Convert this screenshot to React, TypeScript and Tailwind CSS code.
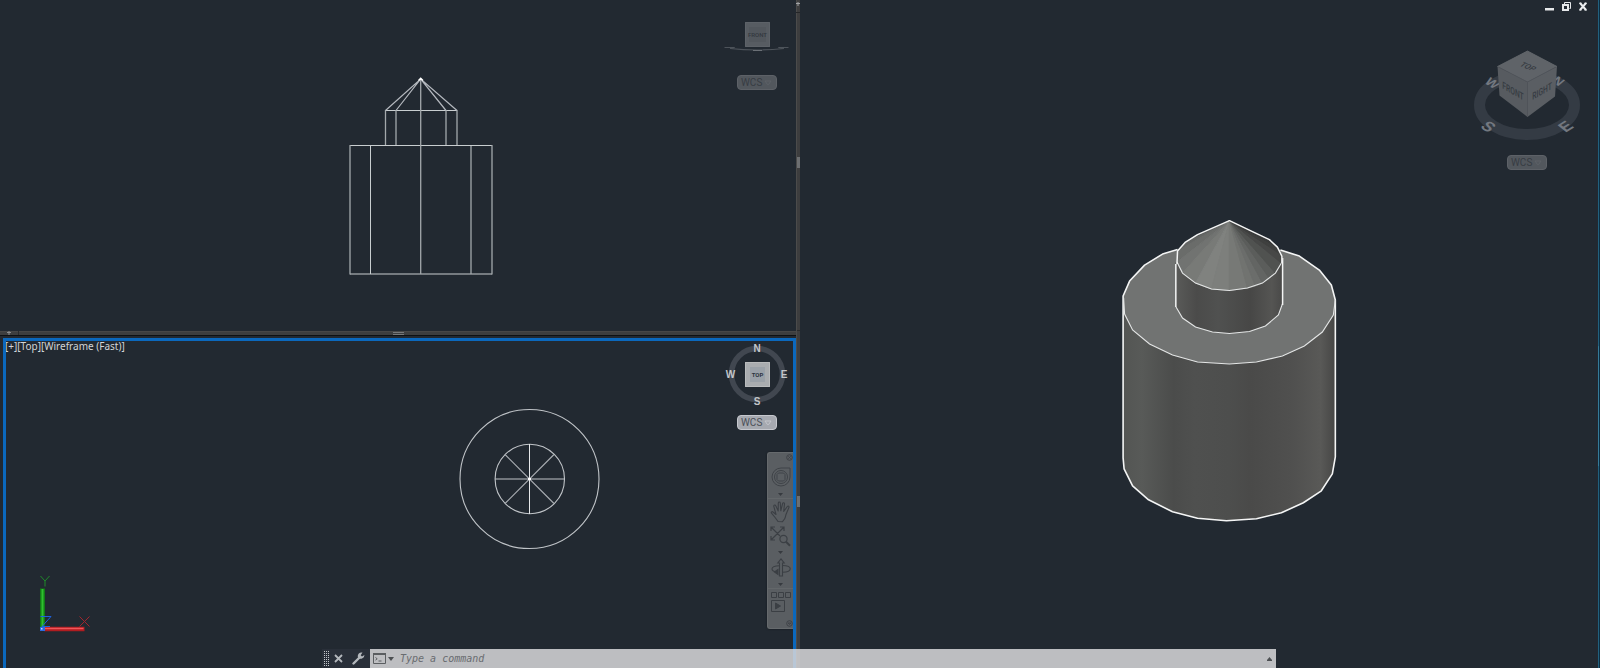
import type { ReactNode } from "react";

const FACE = "Roboto, 'Open Sans', sans-serif";
const ARIAL = "'Liberation Sans', Arial, sans-serif";

function WcsMenu({ active = false, label }: { active?: boolean; label: string }) {
  return (
    <button
      type="button"
      aria-label={label}
      className={
        active
          ? "flex h-[15px] w-10 items-center justify-between rounded border border-[#c6c8ce] bg-[#a6a9b0] pl-[3px] pr-1 font-[Roboto,sans-serif] text-[10px] leading-none text-[#4b4f57]"
          : "flex h-[15px] w-10 items-center justify-between rounded border border-[#5d6167] bg-[#52575d] pl-[3px] pr-1 font-[Roboto,sans-serif] text-[10px] leading-none text-[#373c43]"
      }
    >
      <span>WCS</span>
      <svg width="8" height="6" viewBox="0 0 8 6" fill="none" stroke={active ? "#c4c6cc" : "#5c6167"}>
        <path d="M1 1h6L4.600 4.500h-1.200z" />
      </svg>
    </button>
  );
}

function FrontView() {
  return (
    <svg className="absolute inset-0 h-full w-full" viewBox="0 0 796 331" fill="none" aria-label="Front wireframe">
      <g stroke="#c9ced0" strokeWidth="1">
        <path d="M350 145.500H492M350 274H492M385.500 110.500H457" />
        <path d="M370.500 146V274" />
      </g>
      <g stroke="#a3a8ab" strokeWidth="1.300">
        <path d="M350 145V274.500M492 145V274.500M471 146V274M420.700 79V274" />
        <path d="M385.500 110V145M396 110V145M446 110V145M457 110V145" />
      </g>
      <g stroke="#b4b8be" strokeWidth="1.200">
        <path d="M385.500 110.500L420.700 79L457 110.500M396 110.500L420.700 79L446 110.500" />
      </g>
      <path d="M418.500 80.500l2.200-2.300 2.300 2.300" stroke="#fff" strokeWidth="1.300" />
    </svg>
  );
}

function FrontCube() {
  return (
    <svg width="72" height="32" viewBox="721 20 72 32" fill="none">
      <path d="M724.500 47.500h10l-4 1M788.500 47.500h-10l4 1" stroke="#4d535a" />
      <path d="M730 48.500Q757 51.500 784 48.500" stroke="#4d535a" strokeWidth="1.200" />
      <path d="M753 50.500h9" stroke="#6b7076" strokeWidth="1" />
      <path d="M745 22h25v25h-25z" fill="#575c62" />
      <path d="M745.500 22.500h24v24h-24z" stroke="#5d6268" />
      <path d="M749 27h17v15h-17z" fill="#52575d" />
      <text x="757.500" y="37" textAnchor="middle" fontFamily={FACE} fontSize="6" fontWeight="500" fill="#33383f">
        FRONT
      </text>
    </svg>
  );
}

function TopCube() {
  return (
    <svg width="72" height="66" viewBox="721 341 72 66" fill="none">
      <circle cx="757" cy="374" r="25.500" stroke="#414750" strokeWidth="5.500" />
      <path d="M745 362h25v25h-25z" fill="#a9acaf" />
      <path d="M745.500 362.500h24v24h-24z" stroke="#b9bbbc" />
      <path d="M750 367h15v15h-15z" fill="#9aa1a8" />
      <text x="757.500" y="376.500" textAnchor="middle" fontFamily={FACE} fontSize="6" fontWeight="700" fill="#2b3440">
        TOP
      </text>
      <g fontFamily={ARIAL} fontSize="10" fontWeight="700" fill="#c3c6ca" textAnchor="middle">
        <text x="757" y="351.500">N</text>
        <text x="757" y="405">S</text>
        <text x="730.500" y="378">W</text>
        <text x="784" y="378">E</text>
      </g>
    </svg>
  );
}

function IsoCube() {
  return (
    <svg width="110" height="94" viewBox="1472 48 110 94" fill="none">
      <ellipse cx="1527" cy="105" rx="47.500" ry="29.500" stroke="#343b44" strokeWidth="11" />
      <g fontFamily={ARIAL} fontSize="17" fontWeight="700" fill="#737880" textAnchor="middle">
        <text transform="matrix(.8 .5 -.7 .6 1489 86)" fontSize="14">W</text>
        <text transform="matrix(.8 .5 -.7 .6 1555 84)" fontSize="14">N</text>
        <text transform="matrix(.8 .5 -.75 .6 1484 130)">S</text>
        <text transform="matrix(.8 -.5 .75 .6 1570 130)">E</text>
      </g>
      <path d="M1527.500 51L1557 66.500 1527.500 82 1497.500 66.500z" fill="#5f6368" />
      <path d="M1497.500 66.500L1527.500 82V117L1499.500 95.500z" fill="#575b60" />
      <path d="M1557 66.500L1527.500 82V117L1555 96.500z" fill="#5a5e63" />
      <path d="M1497.500 66.500L1527.500 82 1557 66.500M1527.500 82V117" stroke="#50545a" strokeWidth=".8" />
      <path d="M1497.500 66.500L1527.500 51 1557 66.500" stroke="#666a6f" strokeWidth=".8" />
      <g fontFamily={FACE} fontWeight="500" fill="#363b42" textAnchor="middle">
        <text transform="matrix(.8 .35 -.7 .6 1526 68.500)" fontSize="9">TOP</text>
        <text transform="matrix(.75 .43 0 1.100 1513 94.500)" fontSize="9">FRONT</text>
        <text transform="matrix(.75 -.43 0 1.100 1542 94.500)" fontSize="9">RIGHT</text>
      </g>
    </svg>
  );
}

function TopView() {
  return (
    <svg className="absolute inset-0 h-full w-full" viewBox="6 341 787 327" fill="none" aria-label="Top wireframe">
      <g stroke="#c0c4c8" strokeWidth="1.100">
        <circle cx="529.500" cy="479" r="69.500" />
        <circle cx="529.800" cy="479" r="34.700" />
        <path d="M495 479H564.500" />
        <path d="M505 454.500L554 503.500M554 454.500L505 503.500" stroke="#a9adb2" />
      </g>
      <path d="M529.500 444V514" stroke="#e6e8ea" />
      <path d="M528 479h3" stroke="#fff" strokeWidth="2" />
    </svg>
  );
}

function UcsIcon() {
  return (
    <svg className="absolute bottom-[35px] left-8" width="56" height="60" viewBox="38 573 56 60" fill="none" aria-label="UCS axes">
      <path d="M40.500 576l4.500 5 4.500-5M45 581v5.500" stroke="#1f8a2a" />
      <path d="M79.500 616.500l10 10M89.500 616.500l-10 10" stroke="#a0262e" />
      <path d="M42.500 588.500V629" stroke="#127a17" strokeWidth="5" />
      <path d="M42.500 589V629" stroke="#2fc02f" strokeWidth="2" />
      <path d="M44 629H84.500" stroke="#b01c20" strokeWidth="4.600" />
      <path d="M44 628.500H83.500" stroke="#f0565a" strokeWidth="1.400" />
      <path d="M40.500 616.500h10.500l-9 10h8" stroke="#1d62e0" />
      <path d="M40 627h5v4h-5z" fill="#2b6be0" />
      <path d="M41 628h1.500v1.500H41z" fill="#b9d4ff" />
    </svg>
  );
}

const coneBase: [number, number, string][] = [
  [1186, 242, "#5f6160"],
  [1178, 251, "#636564"],
  [1177.500, 262, "#6a6c6a"],
  [1183, 273, "#717371"],
  [1196, 283, "#787a77"],
  [1212, 289, "#80827f"],
  [1230, 290.500, "#7d7f7c"],
  [1248, 288, "#777976"],
  [1256, 286, "#717370"],
  [1263, 283, "#6b6d6b"],
  [1270, 278.500, "#636563"],
  [1276, 273, "#5b5d5b"],
  [1282, 263, "#505250"],
  [1282.500, 255, "#474847"],
  [1278, 247, "#3f403f"],
  [1270, 239.500, "#3a3b3b"],
];

function SolidModel() {
  return (
    <svg className="absolute inset-0 h-full w-full" viewBox="800 0 800 668" fill="none" aria-label="Shaded model">
      <defs>
        <linearGradient id="body" x1="1123" x2="1336" y1="0" y2="0" gradientUnits="userSpaceOnUse">
          <stop offset="0" stopColor="#535553" />
          <stop offset=".09" stopColor="#585a58" />
          <stop offset=".24" stopColor="#4b4c4b" />
          <stop offset=".34" stopColor="#4f504f" />
          <stop offset=".5" stopColor="#4d4e4d" />
          <stop offset=".6" stopColor="#4a4a49" />
          <stop offset=".8" stopColor="#50504f" />
          <stop offset=".93" stopColor="#595957" />
          <stop offset="1" stopColor="#464645" />
        </linearGradient>
        <linearGradient id="neck" x1="1176" x2="1283" y1="0" y2="0" gradientUnits="userSpaceOnUse">
          <stop offset="0" stopColor="#5a5b59" />
          <stop offset=".2" stopColor="#4b4b4a" />
          <stop offset=".4" stopColor="#505150" />
          <stop offset=".7" stopColor="#474746" />
          <stop offset=".9" stopColor="#555553" />
          <stop offset="1" stopColor="#494948" />
        </linearGradient>
      </defs>
      <path d="M1123.500 296V458L1124.500 469 1133 486 1149 500 1173 512 1198 518.500 1227 521 1257 519 1282 513 1304 503 1322 491 1333 474 1336 457V300z" fill="url(#body)" />
      <path d="M1123.500 296L1130 281 1145 265 1163 254 1190 246H1270L1281 250 1300 256 1320 270 1332 285 1336 300 1334 315 1323 332 1305 346 1283 356 1257 362 1230 364 1198 362 1173 355 1150 344 1133 330 1125 314z" fill="#717372" />
      <path d="M1178 249.500L1163 254 1145 265 1130 281 1123.500 296V458L1124.500 469 1133 486 1149 500 1173 512 1198 518.500 1227 521 1257 519 1282 513 1304 503 1322 491 1333 474 1336 457V300L1332 285 1320 270 1300 256 1281 250" stroke="#f4f5f5" strokeWidth="1.600" strokeLinejoin="round" />
      <path d="M1124 298L1125 314 1133 330 1150 344 1173 355 1198 362 1230 364 1257 362 1283 356 1305 346 1323 332 1334 315 1336 300" stroke="#e4e6e6" strokeWidth="1.100" />
      <path d="M1176 262V306L1183 318 1196 327 1213 332 1230 333.500 1250 331.500 1266 326 1279 315 1283 304V255z" fill="url(#neck)" />
      <path d="M1176.500 307L1183 318 1196 327 1213 332 1230 333.500 1250 331.500 1266 326 1279 315 1283 304" stroke="#e4e6e6" strokeWidth="1.100" />
      <path d="M1176.300 264V307M1283.200 258V305" stroke="#f4f5f5" strokeWidth="1.500" />
      {coneBase.slice(1).map(([x, y, color], i) => (
        <path
          key={i}
          d={`M1230 220.500L${coneBase[i][0]} ${coneBase[i][1]} ${x} ${y}z`}
          fill={color}
          stroke={color}
          strokeWidth="1"
          strokeLinejoin="round"
        />
      ))}
      <path d="M1186 242L1198 234.500 1230 220.500z" fill="#5a5c5b" />
      <path d="M1230 220.500L1252 231 1270 239.500z" fill="#4d4f4e" />
      <path d="M1177.500 262L1183 273 1196 283 1212 289 1230 290.500 1248 288 1263 283 1276 273 1282 263" stroke="#e4e6e6" strokeWidth="1.100" />
      <path d="M1177.500 264V262L1178 251 1186 242 1198 234.500 1230 220.500 1252 231 1270 239.500 1278 247 1282.500 256V263" stroke="#f4f5f5" strokeWidth="1.500" strokeLinejoin="round" />
    </svg>
  );
}

function NavButton({ label, className, children }: { label: string; className: string; children: ReactNode }) {
  return (
    <button type="button" aria-label={label} className={className}>
      {children}
    </button>
  );
}

function NavArrow({ label }: { label: string }) {
  return (
    <NavButton label={label} className="flex h-2 w-full items-center justify-center">
      <svg width="5" height="3" viewBox="0 0 5 3">
        <path d="M0 0h5L2.500 3z" fill="#363a3f" />
      </svg>
    </NavButton>
  );
}

function NavigationBar() {
  return (
    <nav
      aria-label="Navigation bar"
      className="absolute right-0 top-[111px] flex w-[26px] flex-col items-center rounded-l-[3px] border border-r-0 border-[#666a6d] bg-[#5a5e62] pb-px pt-px shadow-[0_0_2px_#12161b]"
    >
      <NavButton label="Close" className="self-end">
        <svg width="7" height="7" viewBox="0 0 7 7" fill="none" stroke="#3c4045" strokeWidth=".9">
          <circle cx="3.500" cy="3.500" r="2.800" />
          <path d="M2.300 2.300l2.400 2.400M4.700 2.300L2.300 4.700" />
        </svg>
      </NavButton>
      <NavButton label="Steering wheel" className="mt-[3px] flex h-[26px] items-center">
        <svg width="20" height="20" viewBox="0 0 20 20" fill="none" stroke="#3f4348" strokeWidth="1">
          <path d="M10 1h9v9a9 9 0 1 1-9-9z" />
          <circle cx="10" cy="10" r="6.500" />
          <path d="M7.500 6h5L14 7.500v5L12.500 14h-5L6 12.500v-5z" />
        </svg>
      </NavButton>
      <NavArrow label="Steering wheel options" />
      <div className="h-px w-full bg-[#63676a]" />
      <NavButton label="Pan" className="mt-px flex h-6 items-center">
        <svg width="21" height="22" viewBox="0 0 21 22" fill="none" stroke="#3b3f44" strokeWidth="1.100" strokeLinejoin="round" strokeLinecap="round">
          <path d="M8 20.500L5.500 17 1.500 12.200c-.7-1 .5-2 1.500-1.200l3 2.500L3.800 5.300c-.2-1.400 1.500-1.700 2-.5L8.200 10 8.300 2c.1-1.300 1.900-1.300 2 0l.5 7.800L12.600 2.500c.4-1.200 2-.8 1.900.4L13.700 10.500 17.300 5.500c.8-1 2.100-.1 1.600 1L16 13.500c-.3 1-.4 2.500-1.500 4.500L12.500 20.700z" />
        </svg>
      </NavButton>
      <NavButton label="Zoom extents" className="flex h-6 items-center">
        <svg width="21" height="21" viewBox="0 0 21 21" fill="none" stroke="#3b3f44" strokeWidth="1.200">
          <path d="M1.500 1.500L10 10M13.500 1.500l-12 12M1 5V1h4M10 1h4v4M1 10v4h4" />
          <circle cx="13.500" cy="13" r="3.600" />
          <path d="M16 15.700l4 4" strokeWidth="2" />
        </svg>
      </NavButton>
      <NavArrow label="Zoom options" />
      <NavButton label="Orbit" className="flex h-6 items-center">
        <svg width="20" height="20" viewBox="0 0 20 20" fill="none" stroke="#3b3f44" strokeWidth="1.100">
          <path d="M8.500 18V5H6.800L10 1l3.200 4H11.500v13z" />
          <path d="M11.500 7.500c4.500.1 7.700 1.500 7.700 3.300 0 2-3.500 3.400-7.700 3.400M8.500 7.700C4 7.900 1 9.200 1 10.900c0 1.500 2 2.500 4.500 3" />
          <path d="M7 11.500L3.500 14 7 16.500z" fill="#3b3f44" />
        </svg>
      </NavButton>
      <NavArrow label="Orbit options" />
      <div className="h-px w-full bg-[#63676a]" />
      <NavButton label="Show motion" className="mt-[2px] flex h-[22px] items-center">
        <svg width="20" height="20" viewBox="0 0 20 20" fill="none" stroke="#3b3f44">
          <path d="M.5 .5h5v5h-5zM7.500 .5h5v5h-5zM14.500 .5h5v5h-5zM.5 8.500h13v11h-13z" />
          <path d="M4.500 11l5 3-5 3z" fill="#3b3f44" />
        </svg>
      </NavButton>
      <NavButton label="Customize" className="mt-[7px] self-end">
        <svg width="7" height="7" viewBox="0 0 7 7" fill="none" stroke="#3c4045" strokeWidth=".9">
          <circle cx="3.500" cy="3.500" r="2.800" />
          <path d="M2.200 3h2.600L3.500 4.500z" />
        </svg>
      </NavButton>
    </nav>
  );
}

function WindowControls() {
  return (
    <div className="absolute right-[10px] top-[2px] flex items-center gap-[6px]">
      <button type="button" aria-label="Minimize" className="h-[10px] w-[11px]">
        <svg width="11" height="10" viewBox="0 0 11 10">
          <path d="M1 6h9v2.500H1z" fill="#e6e8ea" />
        </svg>
      </button>
      <button type="button" aria-label="Restore" className="h-[10px] w-[11px]">
        <svg width="11" height="10" viewBox="0 0 11 10" fill="none" stroke="#e6e8ea">
          <path d="M3.500 2V.500h6v6H8.500" />
          <path d="M2 3h5v5H2z" strokeWidth="2" />
        </svg>
      </button>
      <button type="button" aria-label="Close" className="h-[10px] w-[11px]">
        <svg width="11" height="10" viewBox="0 0 11 10" fill="none" stroke="#eceef0" strokeWidth="2">
          <path d="M2 1l6 7M8 1L2 8" />
          <path d="M1 1.200h2.500M6.500 1.200H9M1 8h2.500M6.500 8H9" strokeWidth="1" />
        </svg>
      </button>
    </div>
  );
}

function CommandLine() {
  return (
    <form
      className="absolute bottom-0 left-[322px] right-[324px] flex h-[19px]"
      onSubmit={(event) => event.preventDefault()}
    >
      <div className="flex w-[48px] items-center bg-[#2a303b]/90 pl-[2px]">
        <svg width="5" height="15" viewBox="0 0 5 15" fill="#c3c6ca" aria-hidden="true">
          {[0, 2, 4, 6, 8, 10, 12, 14].map((y) => (
            <path key={y} d={`M0 ${y}h1v1h-1zM2 ${y}h1v1h-1zM4 ${y}h1v1h-1z`} />
          ))}
        </svg>
        <button type="button" aria-label="Close command line" className="ml-[5px]">
          <svg width="9" height="9" viewBox="0 0 9 9" fill="none" stroke="#b4b8bd" strokeWidth="1.800">
            <path d="M1 1l7 7M8 1L1 8" />
          </svg>
        </button>
        <button type="button" aria-label="Customize" className="ml-[9px]">
          <svg width="13" height="13" viewBox="0 0 13 13" fill="none">
            <path d="M1.500 11.500L7.500 5.500" stroke="#b4b8bd" strokeWidth="2.400" strokeLinecap="round" />
            <path d="M10.500 .6A3.600 3.600 0 0 0 6 5.200 3.500 3.500 0 0 0 12.400 3L10 4.600 8.700 3.200z" fill="#b4b8bd" />
          </svg>
        </button>
      </div>
      <div className="flex min-w-0 flex-1 items-center bg-[#d8d8da]/85 pl-[3px] pr-1">
        <button type="button" aria-label="Recent commands" className="flex items-center gap-[2px]">
          <svg width="13" height="11" viewBox="0 0 13 11" fill="none" stroke="#5a5d60">
            <path d="M.5 .5h12v10H.5z" />
            <path d="M0 1h13" strokeWidth="2" />
            <path d="M2.500 4.500l1.700 1.300-1.700 1.300M5.500 8h3" />
          </svg>
          <svg width="6" height="4" viewBox="0 0 6 4">
            <path d="M0 0h6L3 4z" fill="#4c4f52" />
          </svg>
        </button>
        <input
          type="text"
          aria-label="Command"
          placeholder="Type a command"
          className="ml-[6px] h-full min-w-0 flex-1 bg-transparent font-['DejaVu_Sans_Mono',monospace] text-[10px] italic text-[#4c4f52] outline-none placeholder:text-[#696c70]"
        />
        <button type="button" aria-label="Command history">
          <svg width="5" height="4" viewBox="0 0 5 4">
            <path d="M0 4h5v-1L2.500 0 0 3z" fill="#4c4f52" />
          </svg>
        </button>
      </div>
    </form>
  );
}

export default function App() {
  return (
    <main className="relative grid h-screen w-full grid-cols-[796fr_4px_800fr] overflow-hidden bg-[#222931]">
      <div className="grid min-w-0 grid-rows-[331fr_4px_333fr]">
        <section aria-label="Front viewport" className="relative min-h-0 overflow-hidden">
          <FrontView />
          <div className="absolute right-[3px] top-5 flex flex-col items-center gap-[23px]">
            <button type="button" aria-label="View cube, front">
              <FrontCube />
            </button>
            <WcsMenu label="Front coordinate system" />
          </div>
        </section>
        <div className="relative flex items-center justify-center border-t border-[#474747] bg-[#3d3e3f]">
          <svg className="absolute -top-px left-[7px]" width="12" height="4" viewBox="0 0 12 4" stroke="#8a8c8e">
            <path d="M0 1.500h4M2 0v4" />
            <path d="M11.500 0v4" stroke="#2a2b2d" />
          </svg>
          <div className="h-[3px] w-[11px] border-y border-[#77797b]" />
        </div>
        <div className="flex min-h-0 border-t border-[#0e1114] pl-[3px] pt-[2px]">
          <section
            aria-label="Top viewport"
            className="relative flex-1 overflow-hidden border-[3px] border-b-0 border-[#0b68bd]"
          >
            <TopView />
            <UcsIcon />
            <button
              type="button"
              className="absolute -left-px -top-px whitespace-nowrap font-['Noto_Sans',sans-serif] text-[10px] leading-3 text-[#d2d5d8]"
            >
              [+][Top][Wireframe (Fast)]
            </button>
            <div className="absolute right-0 top-0 flex flex-col items-center gap-2">
              <button type="button" aria-label="View cube, top">
                <TopCube />
              </button>
              <WcsMenu active label="Top coordinate system" />
            </div>
            <NavigationBar />
          </section>
        </div>
      </div>
      <div className="grid grid-rows-[331fr_4px_333fr] border-l border-[#4b4b4b] bg-[#3d3d3e]">
        <div className="relative flex items-center border-b border-[#2a2b2c] pb-[5px]">
          <svg className="absolute left-[-1px] top-[2px]" width="4" height="12" viewBox="0 0 4 12" stroke="#a2a4a6">
            <path d="M0 1.500h4M2 0v4" />
            <path d="M0 10.500h4" stroke="#252628" />
          </svg>
          <div className="h-[11px] w-[3px] bg-[#6d6f71]" />
        </div>
        <div />
        <div className="flex items-center">
          <div className="h-[11px] w-[3px] bg-[#6d6f71]" />
        </div>
      </div>
      <section aria-label="Isometric viewport" className="relative min-w-0 overflow-hidden border-r border-[#0d3044]">
        <SolidModel />
        <WindowControls />
        <div className="absolute right-[17px] top-12 flex flex-col items-center gap-[13px]">
          <button type="button" aria-label="View cube, isometric">
            <IsoCube />
          </button>
          <WcsMenu label="Isometric coordinate system" />
        </div>
        <div className="absolute inset-y-0 right-0 flex w-px items-center bg-[#22607e]">
          <div className="h-[18%] w-px translate-y-[60%] bg-[#357a99]" />
        </div>
      </section>
      <CommandLine />
    </main>
  );
}
